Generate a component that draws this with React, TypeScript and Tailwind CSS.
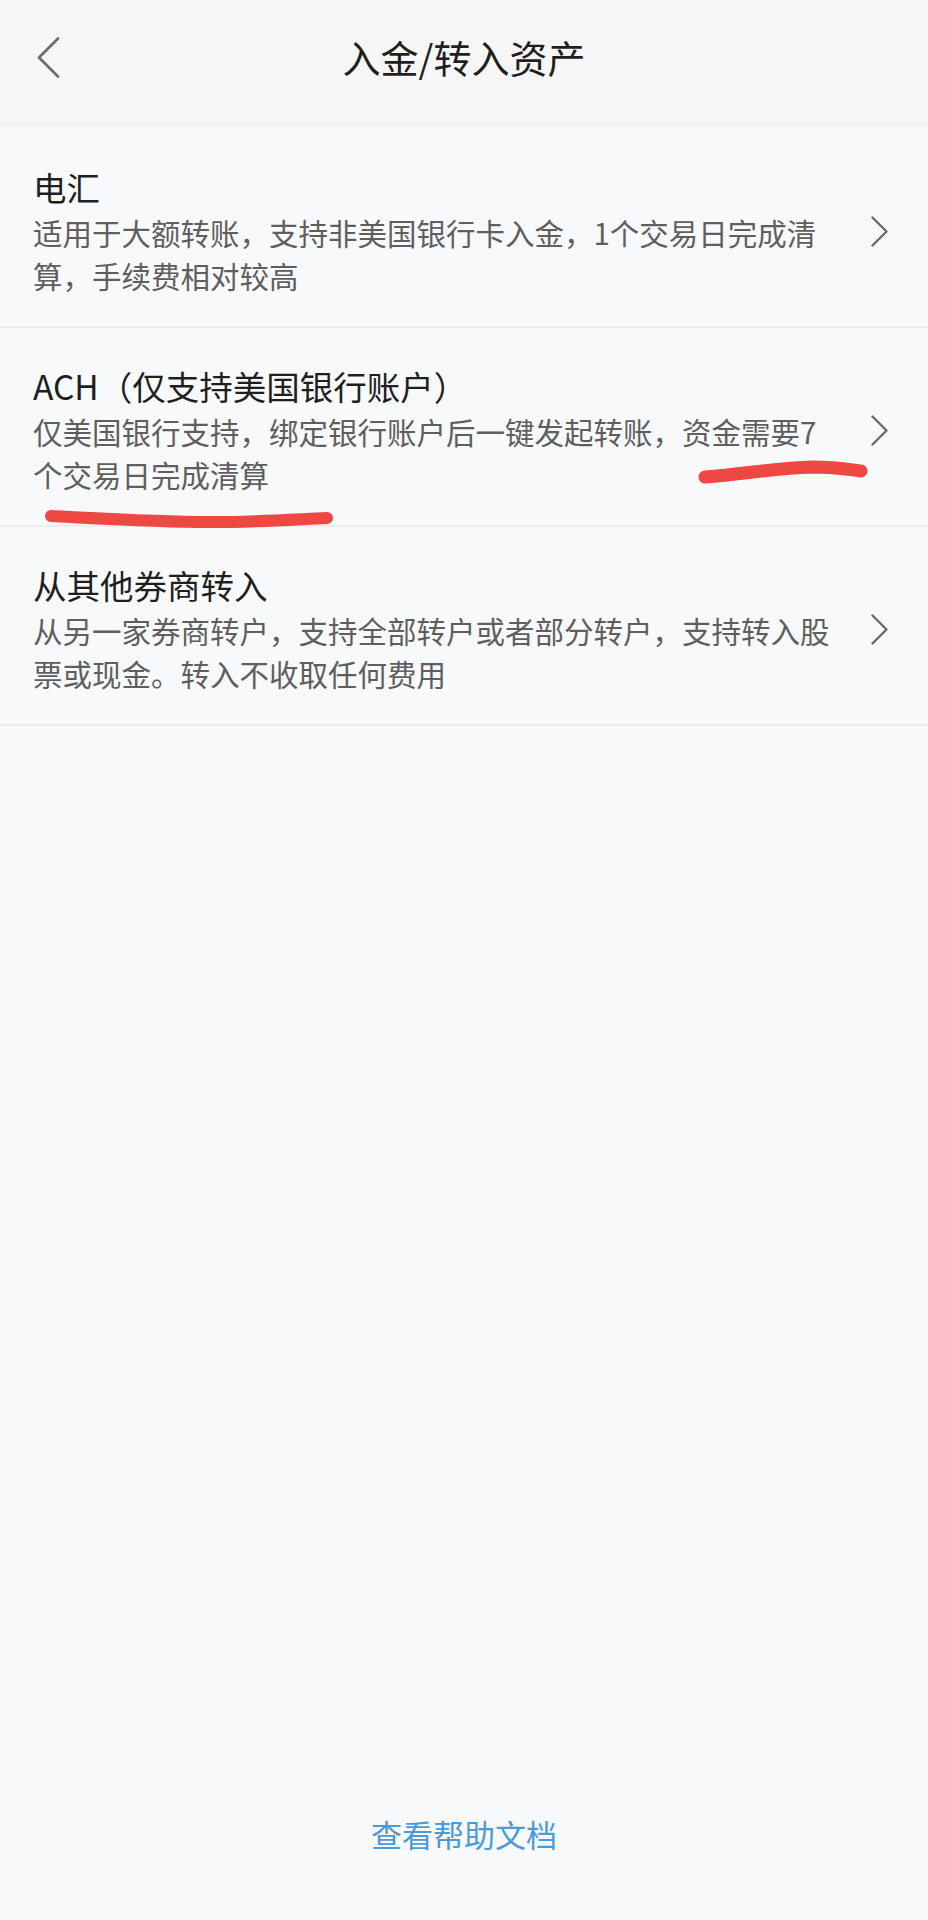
import React from 'react';

interface Method {
  title: string;
  desc: string;
  marked?: boolean;
}

const methods: Method[] = [
  {
    title: '电汇',
    desc: '适用于大额转账，支持非美国银行卡入金，1个交易日完成清算，手续费相对较高',
  },
  {
    title: 'ACH（仅支持美国银行账户）',
    desc: '仅美国银行支持，绑定银行账户后一键发起转账，资金需要7个交易日完成清算',
    marked: true,
  },
  {
    title: '从其他券商转入',
    desc: '从另一家券商转户，支持全部转户或者部分转户，支持转入股票或现金。转入不收取任何费用',
  },
];

const Chevron: React.FC = () => (
  <svg width="17" height="31" viewBox="0 0 17 31" fill="none">
    <polyline points="1.5,1.5 15.5,15.5 1.5,29.5" stroke="#6a6a6a" strokeWidth="2.4" strokeLinecap="round" strokeLinejoin="round" />
  </svg>
);

// hand-drawn red marker lines over the ACH row
const Marks: React.FC = () => (
  <svg
    className="absolute left-0 top-0 pointer-events-none z-10 overflow-visible"
    width="928"
    height="199"
    viewBox="0 0 928 199"
    fill="none"
  >
    <path d="M705 149 C745 146 775 140 812 139 C838 139 852 142 861 143" stroke="#ee4842" strokeWidth="13" strokeLinecap="round" />
    <path d="M51 188 C110 191 160 194 210 194 C260 194 300 191 327 190" stroke="#ee4842" strokeWidth="12" strokeLinecap="round" />
  </svg>
);

const App: React.FC = () => {
  return (
    <div
      className="min-h-[1920px] flex flex-col bg-[#f8f9fb]"
      style={{ fontFamily: '"Noto Sans CJK SC", "Noto Sans", sans-serif' }}
    >
      {/* Header */}
      <div className="h-[122px] grid grid-cols-[100px_1fr_100px] items-start pt-[35px] bg-[#f6f6f7]">
        <button className="pl-[37px] h-[44px] flex items-center">
          <svg width="23" height="41" viewBox="0 0 23 41" fill="none">
            <polyline points="21,1.5 2,20.5 21,39.5" stroke="#6b6b6b" strokeWidth="2.6" strokeLinecap="round" strokeLinejoin="round" />
          </svg>
        </button>
        <h1 className="text-center text-[38px] leading-[44px] text-[#1f1f1f]">入金/转入资产</h1>
        <div />
      </div>
      <div className="h-[7px] bg-gradient-to-b from-[#efeff0] to-[#f8f9fb]" />

      {/* Methods */}
      <div className="flex flex-col">
        {methods.map((m) => (
          <div
            key={m.title}
            className="relative flex items-center pl-[33px] pr-[40px] pt-[36px] pb-[29px] border-b-2 border-[#ebecee]"
          >
            <div className="flex-1 min-w-0">
              <div className="text-[33.5px] leading-[44px] text-[#1f1f1f]">{m.title}</div>
              <div className="mt-[2px] text-[29.5px] leading-[43px] text-[#5e5e5e]">{m.desc}</div>
            </div>
            <div className="ml-[35px] flex-none">
              <Chevron />
            </div>
            {m.marked && <Marks />}
          </div>
        ))}
      </div>

      <div className="flex-1" />

      {/* Help link */}
      <div className="flex justify-center pb-[64px]">
        <button className="text-[31px] leading-[44px] text-[#4a9bd8]">查看帮助文档</button>
      </div>
    </div>
  );
};

export default App;
